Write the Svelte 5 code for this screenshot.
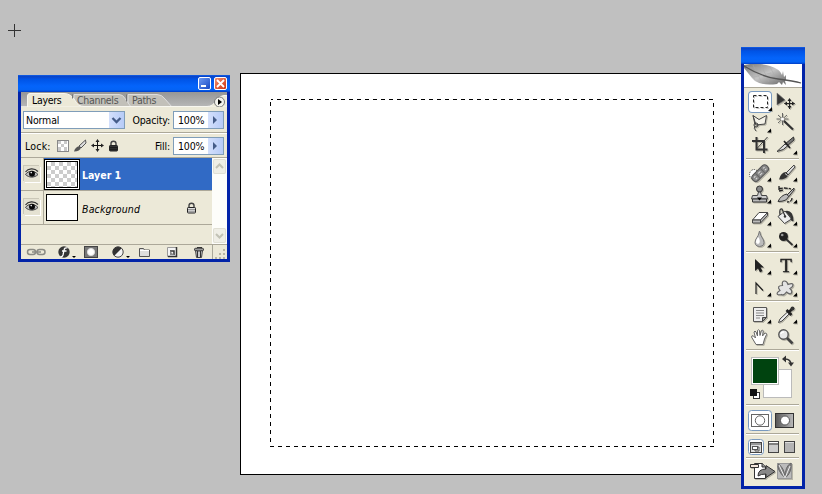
<script>
	let activeTab = $state('Layers');
	let selected = $state('Layer 1');
	let tool = $state('marquee');

	const tabs = ['Layers', 'Channels', 'Paths'];
	const layers = [
		{ name: 'Layer 1', transparent: true, locked: false },
		{ name: 'Background', transparent: false, locked: true }
	];
</script>

{#snippet corner()}
	<path d="M23 15.500v4h-4z" fill="#000" />
{/snippet}

{#snippet eye()}
	<svg class="eye" width="16" height="16" viewBox="0 0 16 16">
		<path d="M1.500 6C4 2.500 10 1.500 14 5.500" fill="none" stroke="#333" stroke-width="1.200" />
		<path d="M1.500 8.500C4 4.500 10 4 14 8.500 10.500 12 5 12 1.500 8.500z" fill="#bbb" stroke="#444" />
		<circle cx="8" cy="7.800" r="3" fill="#080808" />
		<circle cx="7.200" cy="6.600" r=".8" fill="#fff" />
	</svg>
{/snippet}

{#snippet padlock(dark)}
	<svg width="11" height="12" viewBox="0 0 11 12">
		<path d="M3 6V3.500Q3 1.200 5.500 1.200T8 3.500V6" fill="none" stroke="#444" stroke-width="1.400" />
		<rect x="1.500" y="5.500" width="8" height="5.500" rx=".8" fill={dark ? '#333' : '#ddd'} stroke="#222" />
		<path d="M2 7.500h7M2 9.300h7" stroke={dark ? '#111' : '#777'} stroke-width=".7" />
	</svg>
{/snippet}

<main>
	<svg class="cursor" width="13" height="13"><path d="M6.500 0v13M0 6.500h13" stroke="#333" /></svg>

	<div class="document">
		<svg class="selection" width="444" height="348">
			<rect x=".5" y=".5" width="443" height="347" fill="none" stroke="#000" stroke-dasharray="4 4" stroke-dashoffset="2" />
		</svg>
	</div>

	<section class="window layers-window">
		<header>
			<button class="min" aria-label="Minimize"><i></i></button>
			<button class="close" aria-label="Close">
				<svg width="11" height="11"><path d="M2 2l7 7M9 2l-7 7" stroke="#fff" stroke-width="1.800" /></svg>
			</button>
		</header>

		<div class="tabs">
			<svg class="tab-shapes" width="206" height="15" viewBox="0 0 206 15">
				<path d="M107 15V2.500h29q5 0 8 4.500l7 8z" fill="#c2c0b9" stroke="#ddd" />
				<path d="M53 15V2.500h45q4 0 6 4l6 8.500z" fill="#c2c0b9" stroke="#ddd" />
				<path d="M0 15h6.500V4Q6.500 1.500 9 1.500H43q7 0 11 7 3 6 9 6H186q6 0 9-6 4-5 8-5H206V15z" fill="#ece9d8" stroke="#f8f7f0" />
				<path d="M51.500 2.500v4M105.500 2.500v7" stroke="#777" />
				<circle cx="198.500" cy="10" r="5" fill="#f4f3ed" stroke="#777" />
				<path d="M197 7v6l4-3z" fill="#000" />
			</svg>
			{#each tabs as tab}
				<button class="tab {tab.toLowerCase()}" class:active={activeTab === tab} onclick={() => (activeTab = tab)}>{tab}</button>
			{/each}
		</div>

		<div class="row blend">
			<div class="select">
				<span>Normal</span>
				<i class="drop"><svg width="15" height="16"><path d="M3.500 6l4 4 4-4" fill="none" stroke="#455c88" stroke-width="2.300" /></svg></i>
			</div>
			<span class="label">Opacity:</span>
			<div class="number">
				<span>100%</span>
				<i><svg width="15" height="16"><path d="M5 4l4 4-4 4z" fill="#455c88" /></svg></i>
			</div>
		</div>

		<div class="row lock">
			<span class="label lock-label">Lock:</span>
			<div class="locks">
				<svg width="12" height="12" viewBox="0 0 12 12">
					<rect x=".5" y=".5" width="11" height="11" fill="#fff" stroke="#888" />
					<path d="M1 1h3v3H1zM7 1h3v3H7zM4 4h3v3H4zM7 7h3v4H7zM1 7h3v4H1z" fill="#c9c9c9" />
				</svg>
				<svg width="14" height="14" viewBox="0 0 14 14">
					<path d="M12.500 1L6 7l2 2 5-5z" fill="#ddd" stroke="#555" />
					<path d="M6.500 7Q2 8 1 12.500q6 0 7-4z" fill="#555" />
				</svg>
				<svg width="13" height="13" viewBox="0 0 13 13">
					<path d="M6.500 1v11M1 6.500h11" stroke="#111" />
					<path d="M6.500 0l2 3h-4zM6.500 13l2-3h-4zM0 6.500l3-2v4zM13 6.500l-3-2v4z" fill="#222" />
				</svg>
				{@render padlock(true)}
			</div>
			<span class="label">Fill:</span>
			<div class="number">
				<span>100%</span>
				<i><svg width="15" height="16"><path d="M5 4l4 4-4 4z" fill="#455c88" /></svg></i>
			</div>
		</div>

		<div class="list">
			<ul>
				{#each layers as layer}
					<li class:selected={selected === layer.name}>
						<div class="visible">{@render eye()}</div>
						<button class="layer" onclick={() => (selected = layer.name)}>
							<span class="thumb" class:transparent={layer.transparent}></span>
							<span class="name">{layer.name}</span>
							{#if layer.locked}<span class="lock-mark">{@render padlock(false)}</span>{/if}
						</button>
					</li>
				{/each}
			</ul>
			<div class="scrollbar">
				<i><svg width="13" height="15"><path d="M3 9l3.500-3.500L10 9" fill="none" stroke="#c2c2b5" stroke-width="2" /></svg></i>
				<i><svg width="13" height="15"><path d="M3 6l3.500 3.500L10 6" fill="none" stroke="#c2c2b5" stroke-width="2" /></svg></i>
			</div>
		</div>

		<footer>
			<svg width="206" height="14" viewBox="0 0 206 14">
				<g fill="none" stroke="#8b8b85" stroke-width="1.500">
					<rect x="6.500" y="4.500" width="8" height="5" rx="2.500" />
					<rect x="16" y="4.500" width="8" height="5" rx="2.500" />
					<path d="M11 7h9" />
				</g>
				<circle cx="43" cy="7" r="5.700" fill="#353535" />
				<path d="M46.500 3q-3-1-3.500 2.500L42 10q-.5 2-2.500 1.500M41 6h4.500" fill="none" stroke="#fff" stroke-width="1.300" />
				<path d="M51 11h4l-2 2z" />
				<rect x="63.500" y="1.500" width="13" height="11" fill="#777" stroke="#444" />
				<circle cx="70" cy="7" r="3.600" fill="#fff" stroke="#ddd" />
				<circle cx="97" cy="7" r="5.200" fill="#f4f4f4" stroke="#444" />
				<path d="M100.700 3.300A5.200 5.200 0 0 0 93.300 10.700z" fill="#333" />
				<path d="M105 11h4l-2 2z" />
				<path d="M118.500 3.500h4l1 1.500h5v6.500h-10z" fill="#ddd" stroke="#555" />
				<path d="M119 5.500h9" stroke="#fff" />
				<path d="M146.500 2.500h9v9h-9z" fill="#f4f4f4" stroke="#999" />
				<path d="M155.500 2v9.500H147M149 6h4v4" fill="none" stroke="#333" stroke-width="1.500" />
				<path d="M149 6v4h4z" fill="#888" />
				<path d="M174.500 5.500h7l-1 7h-5z" fill="#ccc" stroke="#444" />
				<path d="M176 2.500h5" stroke="#333" />
				<ellipse cx="178" cy="4.500" rx="5" ry="1.500" fill="#999" stroke="#333" />
				<path d="M176.500 6v6M179.500 6v6" stroke="#333" />
				<path d="M191.500 0v14" stroke="#aaa89a" />
				<path d="M202 4h2v2h-2zM198 8h2v2h-2zM202 8h2v2h-2zM194 12h2v2h-2zM198 12h2v2h-2zM202 12h2v2h-2z" fill="#b8b5a3" />
			</svg>
		</footer>
	</section>

	<section class="window toolbox">
		<header></header>
		<svg class="feather" width="58" height="23" viewBox="0 0 58 23">
			<defs>
				<linearGradient id="plume" x1="0" y1="0" x2="1" y2="1">
					<stop offset="0" stop-color="#777" />
					<stop offset=".5" stop-color="#c4c4c4" />
					<stop offset="1" stop-color="#666" />
				</linearGradient>
			</defs>
			<path d="M0 1Q14-2 26 2q10 3 12 9l1-4 1 6 2-2v5l-1 1 1 4-3-3-1 3-3-3-2 2Q19 22 11 17L8 14 0 4z" fill="url(#plume)" />
			<path d="M3 2L11 16M9 1l9 18M17 1l8 17M26 3l7 13M2 4l13 0M10 13l17-4" stroke="#aaa" stroke-width=".5" />
			<path d="M0 2Q18 13 34 15T57 19" fill="none" stroke="#555" stroke-width="1.300" />
		</svg>

		<div class="tools">
			<button class:on={tool === 'marquee'} onclick={() => (tool = 'marquee')} aria-label="Marquee">
				<svg width="26" height="22">
					<rect x="5.500" y="4.500" width="14" height="12" fill="none" stroke="#222" stroke-dasharray="3 2" />
					<path d="M24 16v4h-4z" />
				</svg>
			</button>
			<button aria-label="Move">
				<svg width="26" height="22">
					<path d="M3 2v12l8-5z" fill="#333" stroke="#777" stroke-width=".6" />
					<path d="M15.500 8v10M10.500 12.500h10" stroke="#222" />
					<path d="M15.500 7l2 3h-4zM15.500 18l2-3h-4zM10 12.500l3-2v4zM21 12.500l-3-2v4z" fill="#222" />
				</svg>
			</button>
			<button aria-label="Lasso">
				<svg width="26" height="22">
					<path d="M5 2.500l6 4 7.500-4-1.500 8.500-9 1z" fill="#f4f2e8" stroke="#444" />
					<circle cx="8" cy="12" r="2" fill="none" stroke="#333" />
					<path d="M7 13q-2 2 1 5M5 2.500l2 9" fill="none" stroke="#444" />
					{@render corner()}
				</svg>
			</button>
			<button aria-label="Magic wand">
				<svg width="26" height="22">
					<path d="M8.500 0v12M2.500 6h12M4 2l9 8M13 2l-9 8" stroke="#555" stroke-width=".9" />
					<circle cx="8.500" cy="6" r="1.600" fill="#fff" />
					<path d="M10 8l9 8.500" stroke="#333" stroke-width="2.200" />
				</svg>
			</button>
			<button aria-label="Crop">
				<svg width="26" height="22">
					<path d="M8.500 2v12.500h11M4 6h12v12" fill="none" stroke="#333" stroke-width="2" />
					<path d="M19.500 2L9 13.500" stroke="#333" />
				</svg>
			</button>
			<button aria-label="Slice">
				<svg width="26" height="22">
					<path d="M19.500 2L11 9l2 2 7-6z" fill="#777" stroke="#333" />
					<path d="M11 9L3 16.500q7-1 11-6z" fill="#ddd" stroke="#333" />
					<path d="M10 6l6 7" stroke="#222" stroke-width="1.600" />
					{@render corner()}
				</svg>
			</button>
		</div>
		<hr />
		<div class="tools">
			<button aria-label="Healing brush">
				<svg width="26" height="22">
					<ellipse cx="6" cy="12.500" rx="4.500" ry="5" fill="#fff" stroke="#333" stroke-dasharray="1 1" />
					<g transform="rotate(-45 12 11)">
						<rect x="2" y="7.500" width="20" height="7.500" rx="3.500" fill="#888" stroke="#555" />
						<path d="M8.500 8v6.500M15.500 8v6.500" stroke="#666" />
						<path d="M4.500 10h2M4.500 12.500h2M10.500 10h3M10.500 12.500h3M17.500 10h2M17.500 12.500h2" stroke="#ddd" />
					</g>
					{@render corner()}
				</svg>
			</button>
			<button aria-label="Brush">
				<svg width="26" height="22">
					<path d="M20 3l-8 8 2 2 7-8z" fill="#ddd" stroke="#444" />
					<path d="M12 10q-5 0-7 7.500 8 0 9.500-5z" fill="#333" />
					<path d="M11 11.500l2.500 2" stroke="#ddd" />
					{@render corner()}
				</svg>
			</button>
			<button aria-label="Clone stamp">
				<svg width="26" height="22">
					<circle cx="11.500" cy="5" r="3" fill="#888" stroke="#333" />
					<path d="M10.500 8h2l1 3.500h5l1 3.500h-16l1-3.500h5z" fill="#ccc" stroke="#444" />
					<path d="M4.500 15h14v3h-14z" fill="#bbb" stroke="#333" /><path d="M9 13.500h5l-2.500 3z" />
					{@render corner()}
				</svg>
			</button>
			<button aria-label="History brush">
				<svg width="26" height="22">
					<path d="M20 4l-7 7 1.500 2L20 6z" fill="#bbb" stroke="#333" />
					<path d="M13 10q-6 1-9 7.500 9 0 10.500-5z" fill="#bbb" stroke="#333" />
					<path d="M5 5q5-2 12 0M5 2v5l4-1M18 14q0 4-5 4" fill="none" stroke="#222" stroke-width="1.300" stroke-dasharray="4 1" />
					{@render corner()}
				</svg>
			</button>
			<button aria-label="Eraser">
				<svg width="26" height="22">
					<path d="M11 6.500h8.500L12.500 14H4.500z" fill="#fff" stroke="#444" />
					<path d="M4.500 14h8v3h-8zM12.500 14l7-7.500v3L12.500 17z" fill="#bbb" stroke="#444" />
					{@render corner()}
				</svg>
			</button>
			<button aria-label="Paint bucket">
				<svg width="26" height="22">
					<path d="M4 10.500L11 5l6.500 8-7 4.500z" fill="#eee" stroke="#444" />
					<path d="M6 9q-1-7 2-6l3 7" fill="none" stroke="#333" stroke-width="1.200" />
					<path d="M11 5q8-2 8.500 10-3 1-3-4z" fill="#333" /><circle cx="11" cy="10.500" r="1.200" fill="#333" />
					{@render corner()}
				</svg>
			</button>
			<button aria-label="Blur">
				<svg width="26" height="22">
					<path d="M11.500 3Q11 7 7.500 12q-2 6 4 6.500 6-.5 4-6.500Q12 7 11.500 3z" fill="#bbb" stroke="#777" />
					<path d="M10 9q-4 6 0 7 3-1 1-6z" fill="#fff" />
					{@render corner()}
				</svg>
			</button>
			<button aria-label="Burn">
				<svg width="26" height="22">
					<path d="M12 11l6.500 6" stroke="#333" stroke-width="1.800" />
					<circle cx="9.500" cy="8.500" r="4.500" fill="#222" /><circle cx="8.200" cy="7" r="1.300" fill="#999" />
					{@render corner()}
				</svg>
			</button>
		</div>
		<hr />
		<div class="tools">
			<button aria-label="Path selection">
				<svg width="26" height="22">
					<path d="M7 4v12l3-2.500 2 4 2.500-1.500-2-3.500h3.500z" fill="#222" />
					{@render corner()}
				</svg>
			</button>
			<button aria-label="Type">
				<svg width="26" height="22">
					<text x="12" y="17" class="type">T</text>
					{@render corner()}
				</svg>
			</button>
			<button aria-label="Pen">
				<svg width="26" height="22">
					<path d="M8 17V6l7 7.500" fill="none" stroke="#222" stroke-width="1.200" />
					{@render corner()}
				</svg>
			</button>
			<button aria-label="Custom shape">
				<svg width="26" height="22">
					<path d="M8.500 8.500q-1-4.500 2-4.500 2.500 0 3.500 3.500 5-2 5 .5 0 2-3 3.500 3 3 1 5-1.500 1-4.500-1.500-3 4-5 2.500-1 .5-4 0-1.500-1.500 2.500-4-4-5 2.500-5z" fill="#e4e4e4" stroke="#666" stroke-width="1.200" />
					{@render corner()}
				</svg>
			</button>
		</div>
		<hr />
		<div class="tools">
			<button aria-label="Notes">
				<svg width="26" height="22">
					<path d="M5.500 3.500h13v10l-4 4h-9z" fill="#eee" stroke="#555" />
					<path d="M8 6.500h8M8 9h8M8 11.500h8M8 14h4" stroke="#888" />
					<path d="M18.500 13.500h-4v4z" fill="#999" stroke="#444" />
					{@render corner()}
				</svg>
			</button>
			<button aria-label="Eyedropper">
				<svg width="26" height="22">
					<path d="M13.500 8l-7.500 7-1.500 3.500 3.500-1.500 7.500-7.500z" fill="#eee" stroke="#444" />
					<path d="M12.500 6l5 5M14.500 8.500L18.500 4.500" stroke="#222" stroke-width="2.600" />
					<circle cx="18.500" cy="4.500" r="2" fill="#333" />
					{@render corner()}
				</svg>
			</button>
			<button aria-label="Hand">
				<svg width="26" height="22">
					<path d="M8 18.500L3.500 11q0-2 2-1L7.500 12 6 6q1-2 2 0l1.500 4V4.500q1-1.500 2 0l.5 5 1.500-5q1.500-1 1.700.5L14.500 10l2.500-3q2 0 1.500 1.500L16.500 13 15 18.500z" fill="#fff" stroke="#666" />
				</svg>
			</button>
			<button aria-label="Zoom">
				<svg width="26" height="22">
					<circle cx="9.500" cy="8.500" r="4.700" fill="#e9e9e9" stroke="#555" stroke-width="1.400" />
					<path d="M13 12l5.500 5.500" stroke="#444" stroke-width="2.600" />
					<path d="M7 8q0-2 3-2" fill="none" stroke="#fff" stroke-width="1.300" />
				</svg>
			</button>
		</div>
		<hr />
		<div class="swatches">
			<span class="back"></span>
			<span class="fore"></span>
			<svg class="swap" width="12" height="12">
				<path d="M3 4q6 0 6 6" fill="none" stroke="#333" stroke-width="1.500" />
				<path d="M0 4l4-3.500v7zM9 11.500l-3-4h6z" fill="#333" />
			</svg>
			<svg class="default" width="11" height="11">
				<rect x="3.500" y="3.500" width="6" height="6" fill="#fff" stroke="#333" />
				<rect x="0" y="0" width="7" height="7" fill="#111" />
			</svg>
		</div>
		<hr />
		<div class="modes">
			<svg width="24" height="21">
				<rect class="pressed" x=".5" y=".5" width="23" height="20" rx="3" />
				<rect x="3.500" y="4.500" width="17" height="12" fill="#fff" stroke="#666" />
				<circle cx="12" cy="10.500" r="4.700" fill="#fff" stroke="#666" />
			</svg>
			<svg width="20" height="15">
				<defs>
					<linearGradient id="mask"><stop offset="0" stop-color="#555" /><stop offset="1" stop-color="#bbb" /></linearGradient>
				</defs>
				<rect x=".5" y=".5" width="18" height="14" fill="url(#mask)" stroke="#333" />
				<circle cx="10" cy="7.500" r="4.500" fill="#fff" stroke="#555" />
			</svg>
		</div>
		<hr />
		<div class="modes screens">
			<svg width="16" height="16">
				<rect class="pressed" x=".5" y=".5" width="15" height="15" rx="3" />
				<rect x="2.500" y="3.500" width="11" height="10" fill="#ddd" stroke="#444" />
				<path d="M3 5h10" stroke="#555" /><rect x="4.500" y="7.500" width="5" height="3" fill="#fff" stroke="#555" /><path d="M7 10v2h4V8H9" fill="none" stroke="#555" />
			</svg>
			<svg width="12" height="12"><rect x=".5" y=".5" width="10" height="11" fill="#ccc" stroke="#444" /><path d="M1 1.500h9" stroke="#fff" /><path d="M1 3h9" stroke="#333" /></svg>
			<svg width="12" height="12"><rect x=".5" y=".5" width="10" height="11" fill="#b4b4b4" stroke="#444" /><path d="M1 1.500h9" stroke="#ddd" /></svg>
		</div>
		<hr />
		<svg class="jump" width="46" height="18">
			<path d="M4.500 1.500h8l3 3v12h-11z" fill="#fff" stroke="#333" />
			<path d="M12 1v4h4" fill="#999" stroke="#333" />
			<path d="M.5 2.500h8v3h-8z" fill="#f3e7dc" stroke="#333" />
			<path d="M8 14q0-7 8-7V3.500l9 6-9 6V12q-5 0-8 2z" fill="#888" stroke="#333" />
			<rect x="27.500" y="1.500" width="14" height="15" fill="#bbb" stroke="#999" />
			<path d="M35 16Q26 7 28.500 2q6 4 6.500 14 0-12 6-15 1 10-6 15z" fill="#888" stroke="#666" />
			<path d="M29 3l6 13L40 4" fill="none" stroke="#eee" />
		</svg>
	</section>
</main>

<style>
	:global(body) {
		margin: 0;
		background: #c0c0c0;
	}

	main {
		position: relative;
		width: 822px;
		height: 494px;
		overflow: hidden;
		background: #c0c0c0;
		font: 10.5px/14px 'DejaVu Sans Condensed', 'DejaVu Sans', sans-serif;
		font-stretch: condensed;
		letter-spacing: -0.15px;
		color: #000;
	}

	svg {
		display: block;
		flex: none;
	}

	button {
		padding: 0;
		border: 0;
		background: none;
		font: inherit;
		letter-spacing: inherit;
		color: inherit;
	}

	.cursor {
		position: absolute;
		left: 8px;
		top: 24px;
	}

	.document {
		position: absolute;
		left: 240px;
		top: 73px;
		box-sizing: border-box;
		width: 530px;
		height: 402px;
		padding: 25px 29px;
		border: 1px solid #000;
		background: #fff;
	}

	.selection {
		shape-rendering: crispEdges;
	}

	.window {
		position: absolute;
		display: flex;
		flex-direction: column;
		box-sizing: border-box;
		border: 3px solid #0223a8;
		border-top: 0;
		background: #ece9d8;
	}

	.window header {
		flex: none;
		height: 17px;
		margin: 0 -3px;
		background: linear-gradient(#1264ee 0, #0a44c8 8%, #0054e6 25%, #0464fb 65%, #0463f5 88%, #003bc4);
	}

	.layers-window {
		left: 18px;
		top: 75px;
		width: 212px;
		height: 187px;
	}

	.layers-window header {
		display: flex;
		justify-content: flex-end;
		gap: 3px;
		box-sizing: border-box;
		padding: 2px 3px 0 0;
	}

	header button {
		display: flex;
		box-sizing: border-box;
		width: 13px;
		height: 13px;
		border: 1px solid #fff;
		border-radius: 2px;
		background: linear-gradient(135deg, #6d99f1, #1648c5);
	}

	header .close {
		background: linear-gradient(135deg, #f09070, #cc3412);
	}

	.min i {
		width: 5px;
		height: 2px;
		margin: 7px 0 0 2px;
		background: #fff;
	}

	.tabs {
		position: relative;
		display: flex;
		flex: none;
		height: 15px;
		background: linear-gradient(#969696, #b8b8b8);
		letter-spacing: -0.3px;
	}

	.tab-shapes {
		position: absolute;
		left: 0;
		top: 0;
	}

	.tab {
		position: relative;
		width: 50px;
		padding: 2px 0 0 11px;
		color: #555;
		text-align: left;
		line-height: 13px;
	}

	.tab.channels {
		width: 54px;
		padding-left: 6px;
	}

	.tab.paths {
		padding-left: 7px;
	}

	.tab.active {
		color: #000;
	}

	.row {
		display: flex;
		flex: none;
		align-items: center;
		box-sizing: border-box;
		height: 26px;
		padding: 0 3px 0 2px;
		border-bottom: 1px solid #aca899;
	}

	.lock {
		height: 25px;
		border-top: 1px solid #fff;
	}

	.select,
	.number {
		display: flex;
		align-items: center;
		box-sizing: border-box;
		height: 18px;
		border: 1px solid #7f9db9;
		background: #fff;
	}

	.select {
		width: 102px;
		padding-left: 2px;
	}

	.select span {
		flex: 1;
	}

	.number {
		width: 51px;
		padding-left: 4px;
	}

	.number span {
		flex: 1;
	}

	.select i,
	.number i {
		height: 16px;
		background: linear-gradient(90deg, #d4e0fc, #b6cbf7);
	}

	.label {
		flex: 1;
		padding-right: 3px;
		text-align: right;
	}

	.lock-label {
		flex: none;
		width: 27px;
		padding: 0 5px 0 2px;
		text-align: left;
		letter-spacing: 0.2px;
	}

	.locks {
		display: flex;
		align-items: center;
		gap: 4px;
	}

	.list {
		display: flex;
		flex: none;
		height: 86px;
	}

	ul {
		flex: 1;
		margin: 0;
		padding: 0;
		list-style: none;
	}

	li {
		display: flex;
		box-sizing: border-box;
		height: 33px;
		border-bottom: 1px solid #aca899;
	}

	li + li {
		height: 34px;
	}

	.visible {
		box-sizing: border-box;
		width: 23px;
		padding: 8px 0 0 3px;
		border-right: 1px solid #aca899;
	}

	.eye {
		background: #e5e2d2;
		box-shadow: -1px -1px #cbc8b8, 1px 1px #fff;
	}

	.layer {
		display: flex;
		flex: 1;
		align-items: center;
		padding-left: 2px;
	}

	.selected .layer {
		background: #316ac5;
		color: #fff;
		font-weight: bold;
		letter-spacing: 0;
	}

	.thumb {
		box-sizing: border-box;
		width: 32px;
		height: 27px;
		border: 1px solid #000;
		background: #fff;
	}

	.thumb.transparent {
		background: repeating-conic-gradient(#ccc 0 25%, #fff 0 50%) 0 0 / 8px 8px;
	}

	.selected .thumb {
		outline: 1px solid #fff;
		box-shadow: 0 0 0 2px #000;
	}

	.name {
		flex: 1;
		padding: 2px 0 0 4px;
		text-align: left;
	}

	li:not(.selected) .name {
		font-style: italic;
		letter-spacing: 0.15px;
	}

	.lock-mark {
		padding-right: 15px;
	}

	.scrollbar {
		display: flex;
		flex-direction: column;
		justify-content: space-between;
		width: 15px;
		background: #fdfdfa;
	}

	.scrollbar i {
		margin: 1px;
		border-radius: 2px;
		background: #efeee6;
		box-shadow: inset 0 0 0 1px #e0dfd4;
	}

	footer {
		border-top: 1px solid #aca899;
	}

	.toolbox {
		left: 741px;
		top: 47px;
		width: 64px;
		height: 442px;
	}

	.feather {
		border-bottom: 1px solid #aca899;
		background: #fff;
	}

	.tools {
		display: grid;
		flex: none;
		grid-template-columns: 26px 26px;
		grid-auto-rows: 22px;
		padding-left: 4px;
	}

	.tools svg,
	.jump {
		filter: drop-shadow(1px 1px 0.5px rgba(0, 0, 0, 0.22));
	}

	.feather + .tools {
		padding-top: 3px;
	}

	.tools button.on {
		width: 24px;
		border-radius: 4px;
		background: #fff;
		box-shadow: inset 0 0 0 1px #7a9abf;
	}

	hr {
		flex: none;
		box-sizing: border-box;
		width: 53px;
		height: 2px;
		margin: 1px 0 2px 2px;
		border: 0;
		border-top: 1px solid #aca899;
		border-bottom: 1px solid #fff;
	}

	.type {
		font: 19px 'Liberation Serif', serif;
		text-anchor: middle;
		fill: #222;
		stroke: #222;
		stroke-width: 0.5px;
	}

	/* Foreground and background colour chips overlap on a shared square */
	.swatches {
		position: relative;
		flex: none;
		height: 50px;
	}

	.fore,
	.back {
		position: absolute;
		box-sizing: border-box;
		width: 28px;
		height: 28px;
		border: 1px solid #bbb;
	}

	.fore {
		left: 7px;
		top: 4px;
		background: #00430f;
		box-shadow: inset 0 0 0 1px #fff;
	}

	.back {
		left: 19px;
		top: 16px;
		width: 29px;
		height: 29px;
		background: #fff;
	}

	.swap {
		position: absolute;
		left: 38px;
		top: 2px;
	}

	.default {
		position: absolute;
		left: 6px;
		top: 36px;
	}

	.modes {
		display: flex;
		flex: none;
		align-items: center;
		gap: 3px;
		height: 24px;
		padding-left: 4px;
	}

	.pressed {
		fill: #fff;
		stroke: #7a9abf;
	}

	.screens {
		gap: 4px;
		height: 19px;
	}

	.jump {
		margin: 1px 0 0 6px;
	}
</style>
